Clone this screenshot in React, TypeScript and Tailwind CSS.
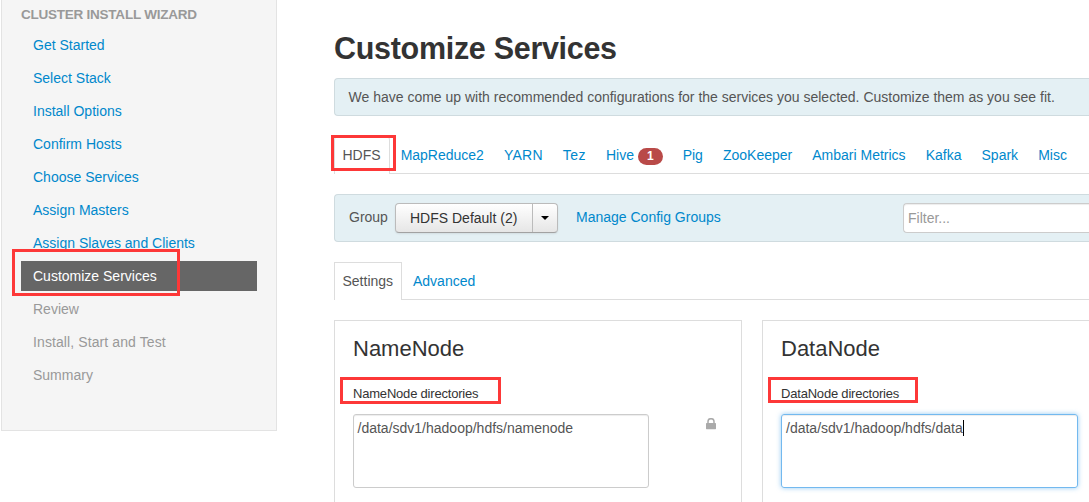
import React from "react";

const doneSteps = [
  "Get Started",
  "Select Stack",
  "Install Options",
  "Confirm Hosts",
  "Choose Services",
  "Assign Masters",
  "Assign Slaves and Clients",
];
const nextSteps = [
  { name: "Review" },
  { name: "Install, Start and Test", spacing: "tracking-[0.1px]" },
  { name: "Summary" },
];
const services = [
  { name: "MapReduce2" },
  { name: "YARN", spacing: "tracking-[0.25px]" },
  { name: "Tez", spacing: "tracking-[0.4px]" },
  { name: "Hive", alerts: 1 },
  { name: "Pig" },
  { name: "ZooKeeper" },
  { name: "Ambari Metrics" },
  { name: "Kafka" },
  { name: "Spark" },
  { name: "Misc" },
];

function Highlight({ className }: { className: string }) {
  return <span className={`pointer-events-none absolute z-10 border-[3px] border-[#fd3838] ${className}`} />;
}

function Sidebar() {
  return (
    <aside className="ml-px h-[431px] w-[276px] shrink-0 border-x border-b border-[#e3e3e3] bg-[#f5f5f5] px-[19px]">
      <h2 className="h-[30px] pt-[5px] text-[13.5px] leading-5 font-bold tracking-[-0.24px] text-[#999]">CLUSTER INSTALL WIZARD</h2>
      <ul className="flex flex-col gap-[3px]">
        {doneSteps.map((s) => (
          <li key={s} className="h-[30px] px-3 leading-[30px] text-[#0088cc]">{s}</li>
        ))}
        <li className="relative h-[30px] w-[236px] bg-[#666] px-3 leading-[30px] text-white">
          Customize Services
          <Highlight className="-top-[12px] -left-[9px] h-[47px] w-[168px]" />
        </li>
        {nextSteps.map((s) => (
          <li key={s.name} className={`h-[30px] px-3 leading-[30px] text-[#999] ${s.spacing ?? ""}`}>{s.name}</li>
        ))}
      </ul>
    </aside>
  );
}

function ServiceTabs() {
  return (
    <nav className="mt-5 flex h-[38px] items-end border-b border-[#ddd]">
      <div className="relative -mb-px mr-[2px] h-[38px] rounded-t border border-b-0 border-[#ddd] bg-white pt-[8px] pr-[8.5px] pl-[7.5px] leading-5 text-[#555]">
        HDFS
        <Highlight className="-top-[2px] -left-[4px] h-[36px] w-[65px]" />
      </div>
      {services.map((s) => (
        <div key={s.name} className={`mr-[2px] flex h-[37px] items-start pt-[9px] pr-[9.55px] pl-[8.5px] leading-5 text-[#0088cc] ${s.spacing ?? ""}`}>
          {s.name}
          {s.alerts && (
            <span className="mt-[3px] ml-1 h-[17px] rounded-[9px] bg-[#b94a48] px-[9px] text-[12px] leading-[16px] font-bold text-white">
              {s.alerts}
            </span>
          )}
        </div>
      ))}
    </nav>
  );
}

function GroupBar() {
  return (
    <div className="mt-5 flex h-12 rounded-l border border-r-0 border-[#cfdbdf] bg-[#e4f0f4] pl-[14px]">
      <span className="w-[46px] pt-3 leading-5 text-[#555]">Group</span>
      <div className="mt-2 flex h-[30px] rounded border border-[#bbb] border-b-[#a2a2a2] bg-linear-to-b from-white to-[#e6e6e6] text-[#333] shadow-[0_1px_2px_rgba(0,0,0,0.08)]">
        <span className="w-[137px] border-r border-[#bbb] pl-[14px] leading-[28px]">HDFS Default (2)</span>
        <span className="flex w-[24px] items-center justify-center">
          <svg width="8" height="4" viewBox="0 0 8 4"><path d="M0 0h8L4 4z" fill="#000" /></svg>
        </span>
      </div>
      <a className="ml-[18px] pt-3 leading-5 text-[#0088cc]">Manage Config Groups</a>
      <div className="mt-2 ml-auto h-[30px] w-[186px] rounded-l border border-r-0 border-[#ccc] bg-white pl-1 leading-[28px] text-[#999] shadow-[inset_0_1px_1px_rgba(0,0,0,0.075)]">
        Filter...
      </div>
    </div>
  );
}

function LockIcon() {
  return (
    <svg className="mt-[4px] ml-[57px]" width="10" height="12" viewBox="0 0 10 12">
      <path d="M2 6V3.6a3 2.9 0 0 1 6 0V6" fill="none" stroke="#aaa" strokeWidth="1.5" />
      <rect x="0" y="5" width="10" height="6.2" rx=".6" fill="#aaa" />
    </svg>
  );
}

export default function App() {
  return (
    <div className="flex h-[502px] w-[1089px] items-start overflow-hidden bg-white font-['Liberation_Sans',Arial,sans-serif] text-[14px]">
      <Sidebar />
      <main className="ml-[57px] h-[502px] w-[755px] shrink-0">
        <h1 className="h-[78px] pt-[28px] text-[30.5px] leading-[40px] font-bold tracking-[-0.3px] text-[#333]">Customize Services</h1>
        <div className="h-[38px] rounded-l border border-r-0 border-[#cfdbdf] bg-[#e4f0f4] pl-[13.5px] leading-[37px] whitespace-nowrap text-[#555]">
          We have come up with recommended configurations for the services you selected. Customize them as you see fit.
        </div>
        <ServiceTabs />
        <GroupBar />
        <nav className="mt-5 flex h-[38px] border-b border-[#ddd]">
          <div className="h-[38px] w-[68px] border border-b-0 border-[#ddd] bg-white pt-2 pl-[7.5px] leading-5 text-[#555]">Settings</div>
          <div className="pt-[9px] pl-[11px] leading-5 text-[#0088cc]">Advanced</div>
        </nav>
        <div className="mt-5 flex h-[182px] gap-5">
          <section className="w-[408px] shrink-0 border border-b-0 border-[#ddd] pl-[18px]">
            <h3 className="pt-[13px] text-[22px] leading-[30px] text-[#333]">NameNode</h3>
            <div className="relative mt-[20px] h-[30px] text-[13px] leading-5 tracking-[-0.2px] text-[#333]">
              NameNode directories
              <Highlight className="-top-[7px] -left-[13px] h-[27px] w-[161px]" />
            </div>
            <div className="flex">
              <div className="h-[74px] w-[296px] rounded-[3px] border border-[#ccc] px-[3.5px] pt-[3px] leading-5 text-[#555] shadow-[inset_0_1px_1px_rgba(0,0,0,0.075)]">
                /data/sdv1/hadoop/hdfs/namenode
              </div>
              <LockIcon />
            </div>
          </section>
          <section className="w-[327px] shrink-0 border border-r-0 border-b-0 border-[#ddd] pl-[18px]">
            <h3 className="pt-[13px] text-[22px] leading-[30px] text-[#333]">DataNode</h3>
            <div className="relative mt-[20px] h-[30px] text-[13px] leading-5 tracking-[-0.2px] text-[#333]">
              DataNode directories
              <Highlight className="-top-[7px] -left-[13px] h-[26px] w-[150px]" />
            </div>
            <div className="flex h-[74px] w-[297px] rounded-[3px] border border-[#73b9ef] px-1 pt-[3px] leading-5 text-[#555] shadow-[inset_0_1px_1px_rgba(0,0,0,0.075),0_0_5px_rgba(82,168,236,0.6)]">
              /data/sdv1/hadoop/hdfs/data
              <span className="mt-[2px] h-4 w-px bg-black" />
            </div>
          </section>
        </div>
      </main>
    </div>
  );
}
